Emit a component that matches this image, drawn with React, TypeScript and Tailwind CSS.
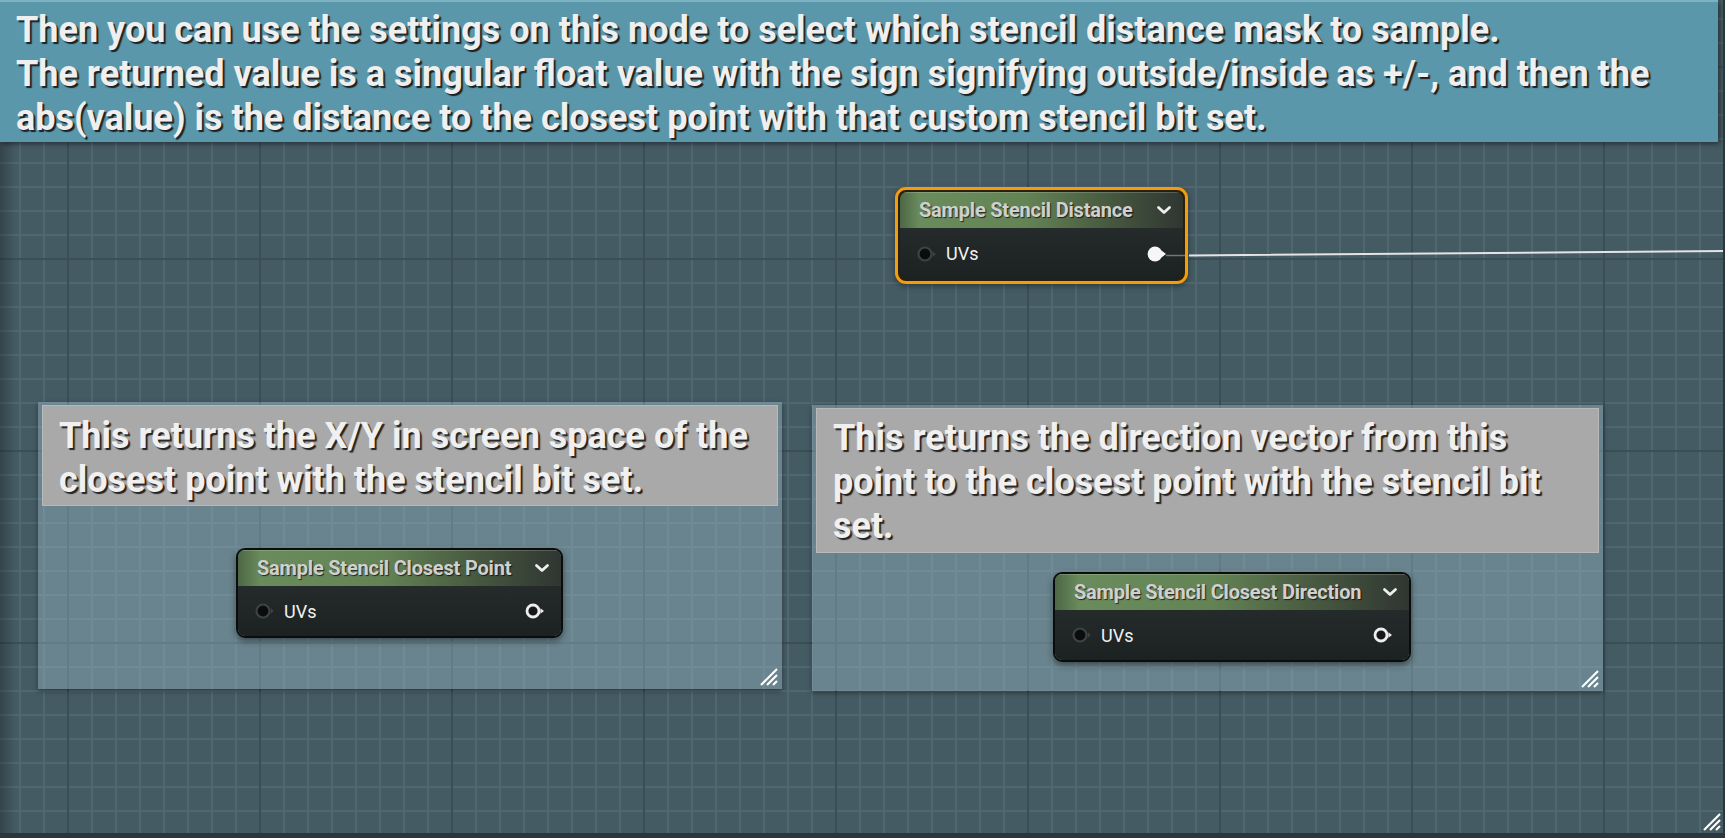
import type { ReactElement } from 'react';

type PinKind = 'in' | 'out-filled' | 'out-hollow';

// Blueprint-style pin: a circle with a little arrow tail
function Pin({ kind }: { kind: PinKind }): ReactElement {
  return (
    <svg width="24" height="18" viewBox="0 0 24 18" className="shrink-0">
      {kind === 'in' ? (
        <>
          <circle cx="9" cy="9" r="6.5" fill="#0b0d0d" stroke="#3d4343" strokeWidth="2.2" />
          <path d="M16.8 6.3 L19.8 9 L16.8 11.7 Z" fill="#3d4343" />
        </>
      ) : kind === 'out-filled' ? (
        <>
          <circle cx="9" cy="9" r="7.4" fill="#f6f6f6" />
          <path d="M15.5 5.6 L20 9 L15.5 12.4 Z" fill="#f6f6f6" />
        </>
      ) : (
        <>
          <circle cx="9" cy="9" r="6" fill="#141818" stroke="#ededed" strokeWidth="2.8" />
          <path d="M16.4 6.2 L20 9 L16.4 11.8 Z" fill="#ededed" />
        </>
      )}
    </svg>
  );
}

function Chevron(): ReactElement {
  return (
    <svg width="16" height="10" viewBox="0 0 16 10" className="shrink-0">
      <path d="M2.5 2.5 L8 7.5 L13.5 2.5" fill="none" stroke="#efefef" strokeWidth="2.8" strokeLinecap="round" strokeLinejoin="round" />
    </svg>
  );
}

function ResizeGrip({ className }: { className: string }): ReactElement {
  return (
    <svg width="19" height="19" viewBox="0 0 19 19" className={className}>
      <g stroke="#ffffff" strokeWidth="2.2">
        <path d="M2 18 L18 2" />
        <path d="M8 18 L18 8" />
        <path d="M14 18 L18 14" />
      </g>
    </svg>
  );
}

type NodeProps = {
  title: string;
  out: PinKind;
  className: string;
};

function MaterialNode({ title, out, className }: NodeProps): ReactElement {
  return (
    <div className={`flex flex-col overflow-hidden ${className}`}>
      <div className="flex h-[36px] shrink-0 items-center justify-between bg-[linear-gradient(90deg,#4c6745_0%,#6a8c5d_7%,#638354_45%,#46573f_75%,#2f3632_100%)] pl-[19px] pr-[11px] shadow-[inset_0_1px_0_rgba(255,255,255,0.18)]">
        <span className="text-[20px] font-bold tracking-[-0.2px] text-[#d0d0d0] [text-shadow:1px_1px_1px_rgba(0,0,0,0.7)]">
          {title}
        </span>
        <Chevron />
      </div>
      <div className="flex flex-1 items-center justify-between bg-[linear-gradient(180deg,#252b2b_0%,#1c2121_100%)] pl-[16px] pr-[13px]">
        <div className="flex items-center gap-[6px]">
          <Pin kind="in" />
          <span className="text-[18px] text-[#f2f2f2]">UVs</span>
        </div>
        <Pin kind={out} />
      </div>
    </div>
  );
}

type CommentProps = {
  lines: string[];
  className: string;
  headerClass: string;
};

function CommentBox({ lines, className, headerClass }: CommentProps): ReactElement {
  return (
    <div className={`flex flex-col bg-[rgba(170,205,216,0.36)] px-[4px] pt-[3px] shadow-[0_2px_5px_rgba(0,0,0,0.4)] ${className}`}>
      <div className={`shrink-0 border border-[#b9b9b9] bg-[#a9a9a9] px-[16px] ${headerClass}`}>
        {lines.map((line) => (
          <div
            key={line}
            className="whitespace-nowrap text-[36px] font-bold leading-[44px] text-[#f0f0f0] [text-shadow:2px_2px_1px_rgba(20,20,20,0.9)]"
          >
            {line}
          </div>
        ))}
      </div>
      <div className="relative flex-1">
        <ResizeGrip className="absolute bottom-[3px] right-[0px]" />
      </div>
    </div>
  );
}

export default function App(): ReactElement {
  return (
    <div className="relative h-[838px] w-[1725px] overflow-hidden bg-[#455b64] font-['Roboto','Liberation_Sans',sans-serif] [background-image:linear-gradient(to_right,#3a4e56_2px,transparent_2px),linear-gradient(to_bottom,#3a4e56_2px,transparent_2px),linear-gradient(to_right,#506770_2px,transparent_2px),linear-gradient(to_bottom,#506770_2px,transparent_2px)] [background-position:67px_66px,67px_66px,19px_18px,19px_18px] [background-size:192px_192px,192px_192px,24px_24px,24px_24px]">
      {/* left edge shading of the graph panel */}
      <div className="absolute inset-y-0 left-0 w-[16px] bg-gradient-to-r from-black/25 to-transparent" />

      {/* banner comment */}
      <div className="absolute left-0 top-0 h-[142px] w-[1718px] border-t-2 border-[#7db2c2] bg-[#5b97aa] pl-[16px] pt-[6px] shadow-[2px_2px_5px_rgba(0,0,0,0.45)]">
        {[
          'Then you can use the settings on this node to select which stencil distance mask to sample.',
          'The returned value is a singular float value with the sign signifying outside/inside as +/-, and then the',
          'abs(value) is the distance to the closest point with that custom stencil bit set.',
        ].map((line) => (
          <div
            key={line}
            className="whitespace-nowrap text-[36px] font-bold leading-[44px] text-[#efefef] [text-shadow:2px_2px_1px_rgba(20,20,20,0.9)]"
          >
            {line}
          </div>
        ))}
      </div>

      <CommentBox
        className="absolute left-[38px] top-[402px] h-[287px] w-[744px]"
        headerClass="h-[101px] pt-[8px]"
        lines={['This returns the X/Y in screen space of the', 'closest point with the stencil bit set.']}
      />

      <CommentBox
        className="absolute left-[812px] top-[405px] h-[286px] w-[791px]"
        headerClass="h-[145px] pt-[7px]"
        lines={[
          'This returns the direction vector from this',
          'point to the closest point with the stencil bit',
          'set.',
        ]}
      />

      {/* selected node, orange outline */}
      <div className="absolute left-[895px] top-[187px] h-[97px] w-[293px] rounded-[11px] border-[3px] border-[#f29d0c] bg-[#2a1e0c] p-[2px] shadow-[0_2px_6px_rgba(0,0,0,0.4)]">
        <MaterialNode className="h-full w-full rounded-[7px]" title="Sample Stencil Distance" out="out-filled" />
      </div>

      <MaterialNode
        className="absolute left-[236px] top-[548px] h-[90px] w-[327px] rounded-[9px] border-2 border-[#0b0d0d] shadow-[0_3px_6px_rgba(0,0,0,0.45)]"
        title="Sample Stencil Closest Point"
        out="out-hollow"
      />

      <MaterialNode
        className="absolute left-[1053px] top-[572px] h-[90px] w-[358px] rounded-[9px] border-2 border-[#0b0d0d] shadow-[0_3px_6px_rgba(0,0,0,0.45)]"
        title="Sample Stencil Closest Direction"
        out="out-hollow"
      />

      {/* wire leaving the selected node */}
      <svg className="pointer-events-none absolute left-0 top-0" width="1725" height="838">
        <path d="M1166 255.5 L1185 255.5" stroke="#6f7474" strokeWidth="1.5" fill="none" />
        <path d="M1189 255.5 C1400 255, 1550 252, 1725 251" stroke="#e4e4e4" strokeWidth="2" fill="none" />
      </svg>

      {/* panel frame */}
      <div className="absolute bottom-0 left-0 h-[5px] w-full bg-[#2b373c]" />
      <div className="absolute right-0 top-0 h-full w-[2px] bg-[#2b373c]" />
      <ResizeGrip className="absolute bottom-[7px] right-[4px]" />
    </div>
  );
}
